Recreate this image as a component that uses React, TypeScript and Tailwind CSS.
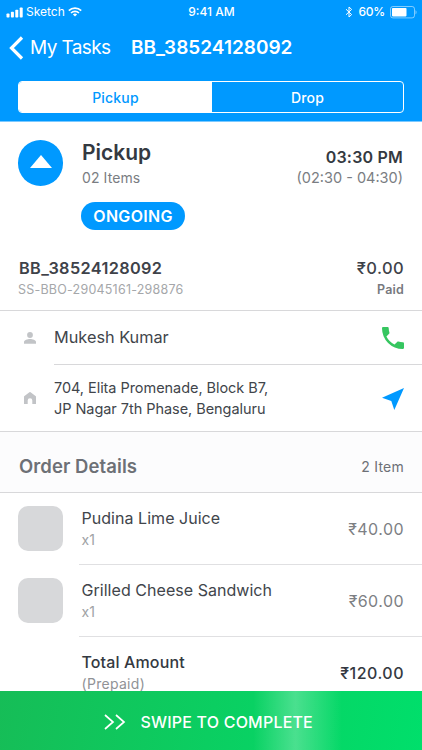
import { ReactNode } from "react";

interface OrderItem {
  name: string;
  qty: string;
  price: string;
}

const ITEMS: OrderItem[] = [
  { name: "Pudina Lime Juice", qty: "x1", price: "₹40.00" },
  { name: "Grilled Cheese Sandwich", qty: "x1", price: "₹60.00" },
];

function StatusBar() {
  return (
    <div className="grid h-6 grid-cols-3 items-center pl-[6px] pr-[5px] text-[12px] leading-[24px]">
      <div className="flex items-center">
        <svg width="18" height="11" viewBox="0 0 18 11" fill="currentColor">
          <rect x="0.5" y="6.5" width="3" height="4" rx="0.8" />
          <rect x="4.9" y="4.8" width="3" height="5.7" rx="0.8" />
          <rect x="9.3" y="2.8" width="3" height="7.7" rx="0.8" />
          <rect x="13.7" y="0.5" width="3" height="10" rx="0.8" />
        </svg>
        <span className="ml-[2px]">Sketch</span>
        <svg className="ml-[3px]" width="14" height="10" viewBox="0 0 14 10" fill="none" stroke="currentColor">
          <path d="M0.8 3.7a8.9 8.9 0 0 1 12.4 0" strokeWidth="1.7" />
          <path d="M3 6a5.8 5.8 0 0 1 8 0" strokeWidth="1.6" />
          <path d="M7 9.6 4.9 7.5a3 3 0 0 1 4.2 0z" fill="currentColor" stroke="none" />
        </svg>
      </div>
      <div className="text-center font-medium">9:41 AM</div>
      <div className="flex items-center justify-end">
        <svg width="8" height="12" viewBox="0 0 8 12" fill="none" stroke="currentColor" strokeWidth="1">
          <path d="M1 3.2 6.6 8.6 4 11V1l2.6 2.4L1 8.8" />
        </svg>
        <span className="ml-[5px] font-medium tracking-[-0.2px]">60%</span>
        <svg className="ml-[5px]" width="27" height="13" viewBox="0 0 27 13">
          <rect x="0.5" y="0.5" width="24" height="11.4" rx="2.4" fill="none" stroke="#fff" strokeOpacity="0.5" />
          <rect x="2" y="2" width="14.5" height="8.4" rx="0.8" fill="#fff" />
          <path d="M25.5 4.200c1.400.4 1.400 3.600 0 4z" fill="#fff" fillOpacity="0.5" />
        </svg>
      </div>
    </div>
  );
}

function Header() {
  return (
    <header className="h-[122px] shrink-0 border-b border-[#7cc9ff] bg-[#0099ff] text-white">
      <StatusBar />
      <div className="flex h-12 items-center pl-[9px] leading-[48px]">
        <svg width="15" height="24" viewBox="0 0 15 24" fill="none" stroke="currentColor" strokeWidth="3.2">
          <path d="M13 1.5 2.5 12 13 22.5" />
        </svg>
        <span className="ml-[6px] w-[101px] text-[19px] tracking-[-0.6px]">My Tasks</span>
        <span className="text-[19px] font-semibold">BB_38524128092</span>
      </div>
      <div className="mx-[18px] mt-[9px] flex h-8 overflow-hidden rounded-[4px] border border-white text-center text-[14px] font-medium leading-[31px] tracking-[0.2px]">
        <button className="w-[193px] bg-white text-[#0099ff]">Pickup</button>
        <button className="flex-1">Drop</button>
      </div>
    </header>
  );
}

function PickupSummary() {
  return (
    <section className="h-[189px] border-b border-[#d8d8da] px-[18px] pt-[18px]">
      <div className="flex h-[105px]">
        <div className="flex h-[46px] w-[45px] items-center justify-center rounded-full bg-[#0099ff]">
          <svg className="-mt-[3px]" width="22" height="13" viewBox="0 0 22 13" fill="#fff">
            <path d="M11 0 22 13H0z" />
          </svg>
        </div>
        <div className="ml-[18px] flex-1">
          <h1 className="pl-px text-[21px] font-semibold leading-[26px] text-[#343941]">Pickup</h1>
          <p className="pl-px text-[14px] leading-[24px] tracking-[0.1px] text-[#7a7d82]">02 Items</p>
          <span className="mt-[12px] flex h-7 w-[104px] items-center justify-center rounded-full bg-[#0099ff] text-[16px] font-semibold tracking-[0.3px] text-white">
            ONGOING
          </span>
        </div>
        <div className="pr-px pt-[7px] text-right">
          <p className="text-[16px] font-semibold leading-[20px] tracking-[0.2px] text-[#343941]">03:30 PM</p>
          <p className="text-[14.5px] leading-[22px] text-[#7a7d82]">(02:30 - 04:30)</p>
        </div>
      </div>
      <div className="flex justify-between pt-[12px]">
        <div>
          <p className="pl-px text-[16.3px] font-semibold leading-[22px] tracking-[0.35px] text-[#3e4249]">
            BB_38524128092
          </p>
          <p className="text-[12.5px] leading-[22px] tracking-[0.22px] text-[#a5a7aa]">SS-BBO-29045161-298876</p>
        </div>
        <div className="text-right">
          <p className="text-[16.5px] font-medium leading-[22px] tracking-[0.4px] text-[#3e4249]">₹0.00</p>
          <p className="text-[12.5px] font-semibold leading-[22px] tracking-[0.2px] text-[#77797e]">Paid</p>
        </div>
      </div>
    </section>
  );
}

interface ContactRowProps {
  icon: ReactNode;
  action: ReactNode;
  className: string;
  children: ReactNode;
}

function ContactRow({ icon, action, className, children }: ContactRowProps) {
  return (
    <div className="flex pl-[18px]">
      <div className="flex w-[23px] items-center justify-center text-[#c2c4c7]">{icon}</div>
      <div className={`ml-[13px] flex flex-1 items-center justify-between pr-[18px] text-[#41454b] ${className}`}>
        {children}
        {action}
      </div>
    </div>
  );
}

function Contact() {
  return (
    <section className="border-b border-[#d8d8da]">
      <ContactRow
        className="h-[54px] border-b border-[#d8d8da]"
        icon={
          <svg width="12" height="12" viewBox="0 0 12 12" fill="currentColor">
            <circle cx="6" cy="3" r="2.9" />
            <path d="M0 11.8V10c0-2 3.5-3 6-3s6 1 6 3v1.8z" />
          </svg>
        }
        action={
          <svg width="22" height="22" viewBox="3 3 18 18" fill="#36c660">
            <path d="M6.62 10.79a15.15 15.15 0 0 0 6.59 6.59l2.2-2.2c.27-.27.67-.36 1.02-.24 1.12.37 2.33.57 3.57.57.55 0 1 .45 1 1V20c0 .55-.45 1-1 1A17 17 0 0 1 3 4c0-.55.45-1 1-1h3.5c.55 0 1 .45 1 1 0 1.25.2 2.45.57 3.57.11.35.03.74-.25 1.02z" />
          </svg>
        }
      >
        <p className="text-[16.3px]">Mukesh Kumar</p>
      </ContactRow>
      <ContactRow
        className="h-[66px] pt-px"
        icon={
          <svg width="12" height="12" viewBox="0 0 12 12" fill="currentColor">
            <path d="M0 12V4.8Q0 4.3.5 4L5.4.3q.6-.5 1.2 0L11.5 4q.5.3.5.8V12H8.3V8.5a2.300 2.300 0 0 0-4.600 0V12z" />
          </svg>
        }
        action={
          <svg width="22" height="22" viewBox="0 0 22 22" fill="#0099ff">
            <path d="M22 0 12.3 22 9.300 13 0 9.700z" />
          </svg>
        }
      >
        <p className="text-[14.5px] leading-[20.5px] tracking-[-0.05px]">
          704, Elita Promenade, Block B7,
          <br />
          JP Nagar 7th Phase, Bengaluru
        </p>
      </ContactRow>
    </section>
  );
}

function ItemRow({ item }: { item: OrderItem }) {
  return (
    <div className="flex h-[72px] pl-[18px]">
      <div className="mt-[13px] h-[45px] w-[45px] rounded-[10px] bg-[#d7d8da]" />
      <div className="ml-[16px] flex flex-1 items-center justify-between border-b border-[#e0e0e2] pl-[2.5px] pr-[18px]">
        <div>
          <p className="text-[16px] leading-[22px] tracking-[0.04px] text-[#41454b]">{item.name}</p>
          <p className="text-[14px] leading-[22px] text-[#a0a2a5]">{item.qty}</p>
        </div>
        <p className="text-[16px] tracking-[0.45px] text-[#7d8084]">{item.price}</p>
      </div>
    </div>
  );
}

function SwipeBar() {
  return (
    <footer className="h-[59px] shrink-0 bg-[linear-gradient(100deg,#16bd57,#00df6b)] text-white">
      <div className="flex h-full items-center bg-[linear-gradient(90deg,transparent_60%,rgba(255,255,255,0.27)_70%,transparent_81%)] pl-[104px] pt-[2px]">
        <svg width="22" height="16" viewBox="0 0 22 16" fill="none" stroke="currentColor" strokeWidth="1.7">
          <path d="M1 1l8 7-8 7M12 1l8 7-8 7" />
        </svg>
        <span className="ml-[14.5px] text-[16px] font-medium tracking-[0.2px]">SWIPE TO COMPLETE</span>
      </div>
    </footer>
  );
}

export default function App() {
  return (
    <div className="flex h-[750px] w-[422px] flex-col overflow-hidden bg-white font-['Inter',sans-serif]">
      <Header />
      <main className="min-h-0 flex-1 overflow-hidden">
        <PickupSummary />
        <Contact />
        <div className="flex h-[61px] items-center justify-between border-b border-[#d8d8da] bg-[#fcfcfd] px-[18px] pt-[9px] text-[#6d7076]">
          <h2 className="pl-px text-[18.5px] font-semibold tracking-[0.08px]">Order Details</h2>
          <span className="text-[14px] tracking-[0.25px]">2 Item</span>
        </div>
        {ITEMS.map((item) => (
          <ItemRow key={item.name} item={item} />
        ))}
        <div className="flex h-[72px] items-center justify-between pl-[81.5px] pr-[18px] text-[16px] font-medium text-[#343941]">
          <div>
            <p className="leading-[22px] tracking-[0.13px]">Total Amount</p>
            <p className="text-[14px] font-normal leading-[22px] tracking-[0.3px] text-[#909296]">(Prepaid)</p>
          </div>
          <p className="tracking-[0.5px]">₹120.00</p>
        </div>
      </main>
      <SwipeBar />
    </div>
  );
}
